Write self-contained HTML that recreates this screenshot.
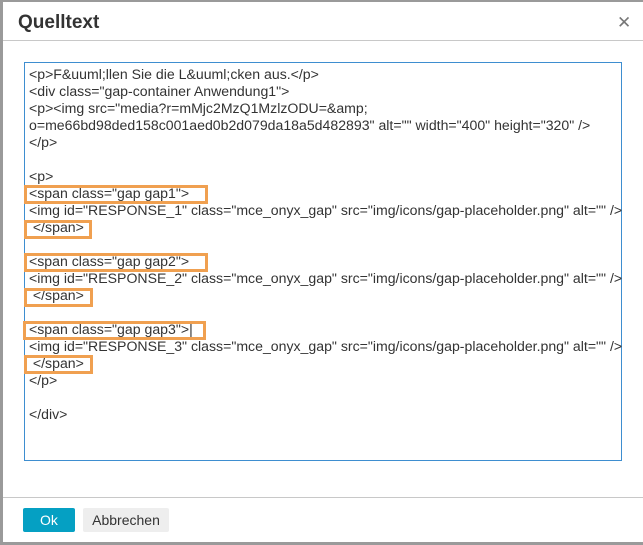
<!DOCTYPE html>
<html><head><meta charset="utf-8"><style>
html,body{margin:0;padding:0;}
body{width:643px;height:545px;background:#9a9a9a;position:relative;overflow:hidden;font-family:"Liberation Sans",Arial,sans-serif;}
.dlg{position:absolute;left:3px;top:2px;width:640px;height:540px;background:#fff;}
.title{position:absolute;left:15px;top:10px;font-size:19px;font-weight:bold;color:#333;}
.x{position:absolute;left:614px;top:11px;font-size:17px;color:#777;}
.hl{position:absolute;left:0;right:0;height:1px;background:#c8c8c8;}
.ta{position:absolute;left:21px;top:60px;width:598px;height:399px;border:1px solid #3e8ed0;box-sizing:border-box;}
.code{position:absolute;left:29px;top:66px;font-size:14.1px;line-height:17px;color:#333;white-space:pre;}
.ob{position:absolute;border:3px solid #f0a050;box-sizing:border-box;}
.btn{position:absolute;top:506px;height:24px;font-size:14px;line-height:24px;text-align:center;border-radius:2px;}
</style></head><body>
<div class="dlg">
<div class="title">Quelltext</div>
<div class="x">✕</div>
<div class="hl" style="top:38px"></div>
<div class="ta"></div>
<div class="hl" style="top:495px"></div>
<div class="btn" style="left:20px;width:52px;background:#05a0c3;color:#fff;">Ok</div>
<div class="btn" style="left:80px;width:86px;background:#eee;color:#333;">Abbrechen</div>
</div>
<div class="code">&lt;p&gt;F&amp;uuml;llen Sie die L&amp;uuml;cken aus.&lt;/p&gt;
&lt;div class="gap-container Anwendung1"&gt;
&lt;p&gt;&lt;img src="media?r=mMjc2MzQ1MzlzODU=&amp;amp;
o=me66bd98ded158c001aed0b2d079da18a5d482893" alt="" width="400" height="320" /&gt;
&lt;/p&gt;

&lt;p&gt;
&lt;span class="gap gap1"&gt;
&lt;img id="RESPONSE_1" class="mce_onyx_gap" src="img/icons/gap-placeholder.png" alt="" /&gt;
 &lt;/span&gt;

&lt;span class="gap gap2"&gt;
&lt;img id="RESPONSE_2" class="mce_onyx_gap" src="img/icons/gap-placeholder.png" alt="" /&gt;
 &lt;/span&gt;

&lt;span class="gap gap3"&gt;|
&lt;img id="RESPONSE_3" class="mce_onyx_gap" src="img/icons/gap-placeholder.png" alt="" /&gt;
 &lt;/span&gt;
&lt;/p&gt;

&lt;/div&gt;</div>
<div class="ob" style="left:24px;top:185px;width:184px;height:19px"></div>
<div class="ob" style="left:24px;top:220px;width:68px;height:19px"></div>
<div class="ob" style="left:24px;top:253px;width:184px;height:19px"></div>
<div class="ob" style="left:24px;top:288px;width:69px;height:19px"></div>
<div class="ob" style="left:23px;top:321px;width:183px;height:19px"></div>
<div class="ob" style="left:24px;top:355px;width:69px;height:19px"></div>
</body></html>
